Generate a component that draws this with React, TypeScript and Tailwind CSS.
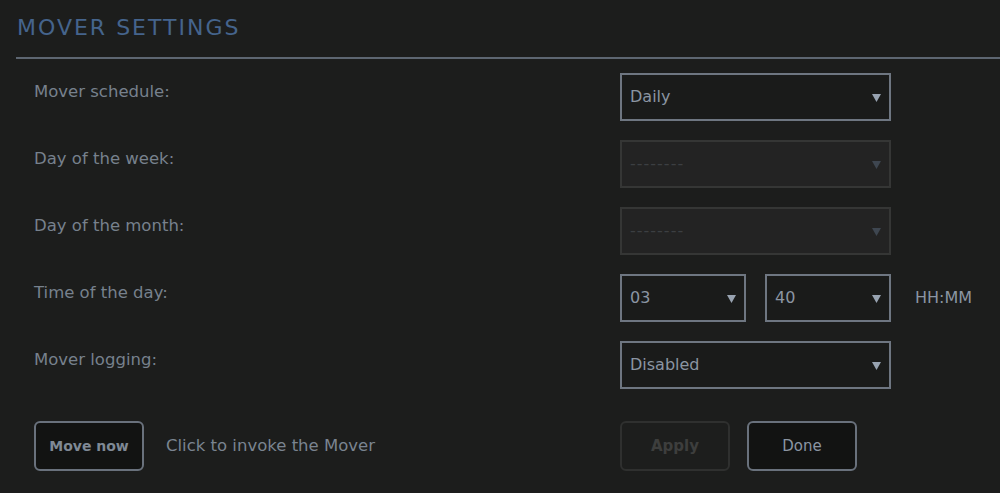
const font = { fontFamily: '"DejaVu Sans", "Liberation Sans", sans-serif' };

function Arrow({ dim }: { dim?: boolean }) {
  return (
    <svg width="9" height="9" viewBox="0 0 9 9" className={dim ? "text-[#3e4650]" : "text-[#98a3b1]"}>
      <path d="M0 1 L9 1 L4.5 9 Z" fill="currentColor" />
    </svg>
  );
}

function Select({ value, width, disabled }: { value: string; width: string; disabled?: boolean }) {
  return (
    <div
      className={`${width} h-[48px] flex items-center justify-between pl-[8px] pr-[8px] border-2 ${
        disabled ? "border-[#353635] bg-[#232323]" : "border-[#6e7681] bg-[#1a1b1a]"
      }`}
    >
      <span className={`text-[16px] ${disabled ? "text-[#3c3f42] tracking-[1px]" : "text-[#8b95a2]"}`}>
        {value}
      </span>
      <Arrow dim={disabled} />
    </div>
  );
}

function Row({ label, children }: { label: string; children: React.ReactNode }) {
  return (
    <div className="flex items-start">
      <div className="w-[586px] pt-[9px] text-[16.5px] leading-[20px] text-[#77818d]">{label}</div>
      {children}
    </div>
  );
}

export default function App() {
  return (
    <div className="w-[1000px] h-[493px] bg-[#1c1d1c] overflow-hidden" style={font}>
      <div className="pl-[16px]">
        <h1 className="pt-[14px] pb-[15px] pl-[1px] text-[22px] leading-[28px] font-normal tracking-[2px] text-[#45648c]">
          MOVER SETTINGS
        </h1>
        <div className="h-[2px] bg-[#5d6671]" />
      </div>

      <div className="pl-[34px] pt-[14px] flex flex-col gap-[19px]">
        <Row label="Mover schedule:">
          <Select value="Daily" width="w-[271px]" />
        </Row>
        <Row label="Day of the week:">
          <Select value="--------" width="w-[271px]" disabled />
        </Row>
        <Row label="Day of the month:">
          <Select value="--------" width="w-[271px]" disabled />
        </Row>
        <Row label="Time of the day:">
          <div className="flex items-center">
            <Select value="03" width="w-[126px]" />
            <div className="w-[19px]" />
            <Select value="40" width="w-[126px]" />
            <span className="ml-[24px] text-[16px] text-[#8b95a2]">HH:MM</span>
          </div>
        </Row>
        <Row label="Mover logging:">
          <Select value="Disabled" width="w-[271px]" />
        </Row>
      </div>

      <div className="pl-[34px] pt-[32px] flex items-center">
        <div className="w-[586px] flex items-center">
          <button className="w-[110px] h-[50px] rounded-[6px] border-2 border-[#69717c] bg-[#121312] text-[14px] font-bold text-[#7f8995]">
            Move now
          </button>
          <span className="ml-[22px] text-[16.5px] text-[#7a8490]">Click to invoke the Mover</span>
        </div>
        <button
          disabled
          className="w-[110px] h-[50px] rounded-[6px] border-2 border-[#2f302f] bg-[#1d1e1d] text-[15px] font-bold text-[#3d3e3d]"
        >
          Apply
        </button>
        <button className="ml-[17px] w-[110px] h-[50px] rounded-[6px] border-2 border-[#69717c] bg-[#121312] text-[15px] text-[#8b95a2]">
          Done
        </button>
      </div>
    </div>
  );
}
